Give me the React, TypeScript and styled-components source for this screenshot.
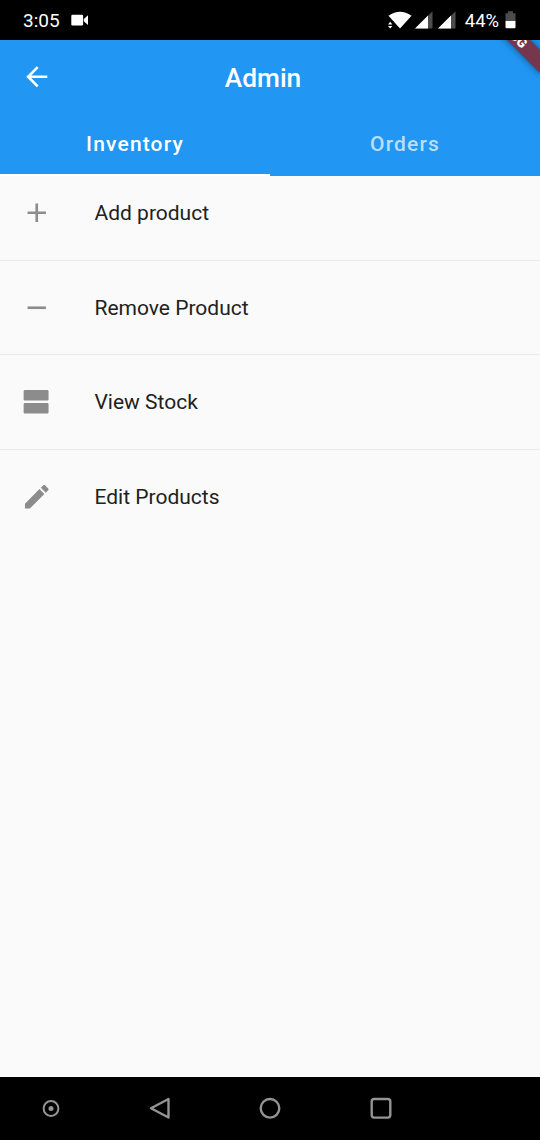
import React from "react";
import styled, { createGlobalStyle } from "styled-components";

const GlobalStyle = createGlobalStyle`
  * { box-sizing: border-box; }
  body { margin: 0; background: #fafafa; font-family: Roboto, "Liberation Sans", sans-serif; }
`;

const Screen = styled.div`
  position: relative;
  display: flex;
  flex-direction: column;
  width: 540px;
  height: 1140px;
  overflow: hidden;
  background: #fafafa;
`;

const StatusBar = styled.header`
  position: relative;
  z-index: 2;
  flex: none;
  display: flex;
  align-items: center;
  height: 40px;
  padding: 0 23px;
  background: #000;
  color: #fff;
  font-size: 19px;
`;

const Clock = styled.span`
  width: 48px;
  line-height: 40px;
  padding-top: 1px;
`;

const StatusIcons = styled.div`
  display: flex;
  align-items: center;
  margin-left: auto;
`;

const Battery = styled.span`
  margin: 0 6px 0 4px;
  font-size: 18.4px;
  line-height: 40px;
  padding-top: 1px;
`;

const AppBar = styled.div`
  flex: none;
  height: 136.3px;
  background: #2196f3;
  color: #fff;
`;

const Toolbar = styled.div`
  display: grid;
  grid-template-columns: 73.5px 1fr 73.5px;
  align-items: center;
  height: 73.5px;
`;

const BackButton = styled.button`
  display: grid;
  place-items: center;
  height: 73.5px;
  padding: 0;
  border: 0;
  background: none;
  color: inherit;
`;

const Title = styled.h1`
  margin: 0;
  padding: 2px 14px 0 0;
  text-align: center;
  font-size: 26.25px;
  font-weight: 500;
  line-height: 34px;
`;

const Tabs = styled.div`
  display: grid;
  grid-template-columns: 1fr 1fr;
`;

const Tab = styled.button<{ $active?: boolean }>`
  height: 62.8px;
  padding: 0;
  border: 0;
  border-bottom: 2px solid ${(p) => (p.$active ? "#fff" : "transparent")};
  background: none;
  color: ${(p) => (p.$active ? "#fff" : "rgba(255, 255, 255, 0.7)")};
  font: 500 21px Roboto, sans-serif;
  letter-spacing: 1.15px;
`;

const List = styled.main`
  flex: 1;
`;

const Row = styled.div`
  display: flex;
  align-items: center;
  height: 73.5px;
  padding-left: 21px;
  color: #212121;
  font-size: 21px;
`;

const RowLabel = styled.span`
  margin-left: 42px;
  padding-top: 0.4px;
`;

const Divider = styled.hr`
  height: 1px;
  margin: 10px 0;
  border: 0;
  background: #e9e9e9;
`;

const NavBar = styled.nav`
  flex: none;
  display: grid;
  grid-template-columns: 104px 111px 110px 111px;
  justify-items: center;
  align-items: center;
  height: 63px;
  padding-bottom: 1px;
  background: #000;
`;

const BannerBand = styled.div`
  position: absolute;
  z-index: 1;
  left: 456.5px;
  top: 23.1px;
  width: 105px;
  height: 15.75px;
  transform: rotate(45deg);
  background: rgba(183, 28, 28, 0.6);
  box-shadow: 0 0 7px rgba(0, 0, 0, 0.5);
  color: #fff;
  font-size: 13.4px;
  font-weight: 900;
  line-height: 15.75px;
  text-align: center;
`;

const BannerShade = styled(BannerBand)`
  background: rgba(0, 0, 0, 0.38);
  box-shadow: none;
`;

const Glyph = styled.svg<{ $color?: string }>`
  display: block;
  flex: none;
  width: 31.5px;
  height: 31.5px;
  fill: ${(p) => p.$color ?? "#8c8c8c"};
`;

const Drawing = styled.svg`
  display: block;
  flex: none;
`;

const ITEMS = [
  { label: "Add product", path: "M19 13h-6v6h-2v-6H5v-2h6V5h2v6h6v2z" },
  { label: "Remove Product", path: "M19 13H5v-2h14v2z" },
  {
    label: "View Stock",
    path: "M20 13H3c-.55 0-1 .45-1 1v6c0 .55.45 1 1 1h17c.55 0 1-.45 1-1v-6c0-.55-.45-1-1-1zm0-10H3c-.55 0-1 .45-1 1v6c0 .55.45 1 1 1h17c.55 0 1-.45 1-1V4c0-.55-.45-1-1-1z",
  },
  {
    label: "Edit Products",
    path: "M3 17.25V21h3.75L17.81 9.94l-3.75-3.75L3 17.25zM20.71 7.04c.39-.39.39-1.02 0-1.41l-2.34-2.34c-.39-.39-1.02-.39-1.41 0l-1.83 1.83 3.75 3.75 1.83-1.83z",
  },
];

const Signal = () => (
  <Drawing width="23" height="20" viewBox="0 0 23 20">
    <path d="M0 18.500L17.500 1.200V18.500z" fill="#4c4c4c" />
    <path d="M0 18.500L13 5.500V18.500z" fill="#fff" />
  </Drawing>
);

export default function App() {
  return (
    <Screen>
      <GlobalStyle />
      <StatusBar>
        <Clock>3:05</Clock>
        <Drawing width="18" height="12" viewBox="0 0 18 12">
          <rect x="0.300" y="0.700" width="11.800" height="10.800" rx="1.300" fill="#fff" />
          <path d="M12.800 5L17 1.200v9.800L12.800 7.200z" fill="#fff" />
        </Drawing>
        <StatusIcons>
          <Drawing width="27" height="20" viewBox="0 0 27 20">
            <path d="M.5 5.800Q12-2.300 23.500 5.800L12 18.500z" fill="#fff" />
            <path d="M-1 11h6.300l1 9.500h-8z" fill="#000" />
            <path d="M0 14.500L2.200 11.800l2.200 2.700zM0 15.900h4.400l-2.200 2.700z" fill="#fff" />
          </Drawing>
          <Signal />
          <Signal />
          <Battery>44%</Battery>
          <Drawing width="12" height="20" viewBox="0 0 12 20">
            <path d="M3 1.200h5v2h2.500v7H.5v-7H3z" fill="#4c4c4c" />
            <path d="M.5 10.700h10v6.500q0 1-1 1h-8q-1 0-1-1z" fill="#fff" />
          </Drawing>
        </StatusIcons>
      </StatusBar>
      <AppBar>
        <Toolbar>
          <BackButton aria-label="Back">
            <Glyph viewBox="0 0 24 24" $color="#fff">
              <path d="M20 11H7.830l5.590-5.590L12 4l-8 8 8 8 1.410-1.410L7.830 13H20v-2z" />
            </Glyph>
          </BackButton>
          <Title>Admin</Title>
        </Toolbar>
        <Tabs>
          <Tab $active>Inventory</Tab>
          <Tab>Orders</Tab>
        </Tabs>
      </AppBar>
      <BannerShade />
      <BannerBand>DEBUG</BannerBand>
      <List>
        {ITEMS.map((item, i) => (
          <React.Fragment key={item.label}>
            {i > 0 && <Divider />}
            <Row>
              <Glyph viewBox="0 0 24 24">
                <path d={item.path} />
              </Glyph>
              <RowLabel>{item.label}</RowLabel>
            </Row>
          </React.Fragment>
        ))}
      </List>
      <NavBar>
        <Drawing width="20" height="20" viewBox="0 0 20 20">
          <circle cx="9" cy="10.500" r="7.400" fill="none" stroke="#949494" strokeWidth="2" />
          <circle cx="9" cy="10.500" r="2.500" fill="#949494" />
        </Drawing>
        <Drawing width="24" height="24" viewBox="0 0 24 24">
          <path d="M20.500 3v18.500L3 12.200z" fill="none" stroke="#949494" strokeWidth="2.400" strokeLinejoin="round" />
        </Drawing>
        <Drawing width="24" height="24" viewBox="0 0 24 24">
          <circle cx="12" cy="12.300" r="9.300" fill="none" stroke="#949494" strokeWidth="2.400" />
        </Drawing>
        <Drawing width="24" height="24" viewBox="0 0 24 24">
          <rect x="2.700" y="3" width="18.600" height="18.600" rx="2.500" fill="none" stroke="#949494" strokeWidth="2.400" />
        </Drawing>
      </NavBar>
    </Screen>
  );
}
